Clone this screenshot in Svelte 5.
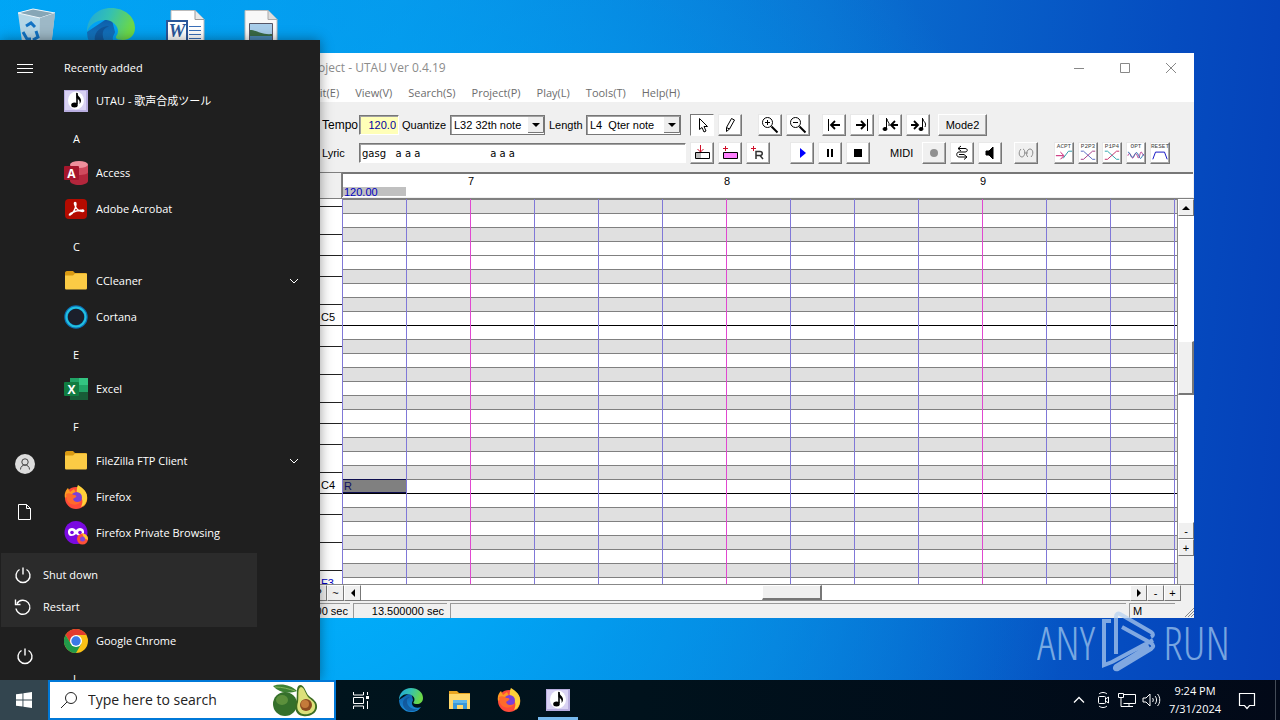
<script>
  const notes = ['C', 'B', 'A#', 'A', 'G#', 'G', 'F#', 'F', 'E', 'D#', 'D', 'C#'];
  // The roll is listed from the top, beginning at G#5.
  const rows = Array.from({ length: 28 }, (_, i) => {
    const note = notes[(i + 4) % 12];
    const label = note === 'C' ? note + (i === 8 ? 5 : 4) : note === 'F' && i === 27 ? 'F3' : '';
    return { id: i, note, label, sharp: note.length === 2 };
  });

  const apps = [
    { head: 'A' },
    { name: 'Access', icon: 'access' },
    { name: 'Adobe Acrobat', icon: 'acrobat' },
    { head: 'C' },
    { name: 'CCleaner', icon: 'folder', more: true },
    { name: 'Cortana', icon: 'cortana' },
    { head: 'E' },
    { name: 'Excel', icon: 'excel' },
    { head: 'F' },
    { name: 'FileZilla FTP Client', icon: 'folder', more: true },
    { name: 'Firefox', icon: 'firefox' },
    { name: 'Firefox Private Browsing', icon: 'private' },
    {},
    {},
    { name: 'Google Chrome', icon: 'chrome' },
    { head: 'I' }
  ];

  const menus = ['Edit(E)', 'View(V)', 'Search(S)', 'Project(P)', 'Play(L)', 'Tools(T)', 'Help(H)'];
  const editGroups = [['pointer', 'pencil'], ['zoomin', 'zoomout'], ['first', 'last', 'prevnote', 'nextnote']];
  const noteButtons = ['insert', 'addnote', 'addrest'];
  const playButtons = ['play', 'pause', 'stop'];
  const midiButtons = ['record', 'loop', 'speaker'];
  const pitchButtons = ['ACPT', 'P2P3', 'P1P4', 'OPT', 'RESET'];
  let lyric = $state('gasg   a a a' + '\u00a0'.repeat(22) + 'a a a');
  let tempo = $state('120.0');
  let query = $state('');
</script>

{#snippet app(name)}
  <svg class="app" viewBox="0 0 24 24" aria-hidden="true">
    {#if name === 'utau'}
      <rect y="1" width="24" height="22" fill="#b9aee0" /><rect x="1" y="2" width="21" height="19" fill="#d9d2f3" />
      <ellipse cx="12" cy="11.500" rx="8" ry="9" fill="#fff" />
      <path d="M13 4v11" stroke="#000" stroke-width="1.600" /><ellipse cx="10.500" cy="16" rx="3.300" ry="2.500" fill="#000" />
      <path d="M12.500 3c.5 4 4.500 5 4.500 8.500 0 1.500-.7 2.500-1.500 3.500.8-3-.5-4.500-3-6z" fill="#000" />
    {:else if name === 'access'}
      <path d="M6 4v16c0 2 4 4 9 4s9-2 9-4V4z" fill="#b3263c" /><path d="M6 4v7c0 2 4 3 9 3s9-1 9-3V4z" fill="#d04a5e" />
      <ellipse cx="15" cy="3.500" rx="9" ry="3.500" fill="#ef8f9c" /><rect y="5" width="15" height="14" rx="1" fill="#a5152b" />
      <text x="7.500" y="16.500" text-anchor="middle" class="letter">A</text>
    {:else if name === 'acrobat'}
      <rect x="1" y="2" width="22" height="20" rx="4" fill="#b30b00" />
      <path d="M6 18c3-1 6-7 6-11 0-2-2-2-1.500 0 1 4 4 7.500 8 7.500 2 0 1.500-1.700-.5-1.500-4 .2-8 1.500-11 3.200-2 1.300-2 2-1 1.800z" fill="none" stroke="#fff" stroke-width="1.400" />
    {:else if name === 'folder'}
      <path d="M1 4c0-1 .5-2 2-2h6l2 2h10c1 0 2 .5 2 2v3H1z" fill="#d99a13" /><path d="M1 6.500h8L11 4.500h12V19c0 1-.6 1.500-1.500 1.500h-19C1.500 20.500 1 20 1 19z" fill="#fbcb45" />
    {:else if name === 'cortana'}
      <circle cx="12" cy="12" r="10" fill="#1b1f2b" stroke="#0b6fb5" stroke-width="3.500" /><circle cx="12" cy="12" r="9.600" fill="none" stroke="#22c1e0" stroke-width="2" />
    {:else if name === 'excel'}
      <path d="M6 1h18v22H6z" fill="#21a366" /><path d="M15 1h9v7h-9z" fill="#33c481" /><path d="M6 1h9v7H6z" fill="#21a366" /><path d="M6 8h9v7H6z" fill="#107c41" /><path d="M6 15h18v8H6z" fill="#185c37" />
      <rect y="5" width="15" height="14" rx="1" fill="#107c41" /><text x="7.500" y="16.500" text-anchor="middle" class="letter">X</text>
    {:else if name === 'firefox'}
      <circle cx="12" cy="13" r="11" fill="#ff4b3a" /><path d="M1 13C0 8 2 5 4 3l2 4 4-3 2 4 2-6c3 1 8 4 9 9 1 4-1 9-4 11 2-5 1-9-3-12L6 9z" fill="#ff9a22" />
      <path d="M14 0c5 3 10 7 9 14-1 4-3 7-6 8 3-6 1-10-3-13-2-3-1-7 0-9z" fill="#ffd13a" />
      <circle cx="12.500" cy="12.500" r="5.500" fill="#7b40d8" /><path d="M2 9c3-2 6 0 8 1 2 0 3 1 2 2l-3 2c1 3 4 4 8 2-2 5-12 5-14-1z" fill="#ff6a2b" />
    {:else if name === 'private'}
      <circle cx="12" cy="11.500" r="11.500" fill="#7a0ae0" /><path d="M5 8c3-2 5-1 7 1 2-2 4-3 7-1 2 2 1 7-2 7-2 0-4-1-5-2-1 1-3 2-5 2-3 0-4-5-2-7z" fill="#fff" />
      <circle cx="8" cy="11.500" r="1.800" fill="#7a0ae0" /><circle cx="16" cy="11.500" r="1.800" fill="#7a0ae0" />
      <circle cx="18.500" cy="18" r="5.500" fill="#ff5138" /><path d="M18 12c4 1 6 3 6 7l-4-2z" fill="#ffc52e" /><circle cx="18.500" cy="18" r="2.500" fill="#8247d6" />
    {:else if name === 'chrome'}
      <circle cx="12" cy="12" r="12" fill="#fbc116" /><path d="M1.600 6A12 12 0 0 1 22.400 6H12l-5 9z" fill="#e33b2e" />
      <path d="M1.600 6A12 12 0 0 0 12 24l5.200-9H7z" fill="#219a4a" /><circle cx="12" cy="12" r="6" fill="#fff" /><circle cx="12" cy="12" r="4.700" fill="#3b79e8" />
    {:else if name === 'edge'}
      <defs>
        <linearGradient id="edge-top" x1="0" x2="1" y2=".3"><stop offset="0" stop-color="#1ea5e0" /><stop offset=".5" stop-color="#35c1b0" /><stop offset="1" stop-color="#6bd848" /></linearGradient>
        <linearGradient id="edge-low" x2="0" y2="1"><stop stop-color="#0c59a4" /><stop offset="1" stop-color="#1b8fdc" /></linearGradient>
      </defs>
      <path d="M0 12a12 12 0 0 0 12 12c5 0 8-2 10-5-3 1.500-8 1-9-3-.500-2 1-3 1-4L12 4z" fill="url(#edge-low)" />
      <path d="M0 12C0 5 5 0 12 0s12 4.500 12 10c0 4-3 6-6 6-4 0-4-1.500-3-2.500C17 10 13 6 9 6 4 6 1 9 0 12z" fill="url(#edge-top)" />
      <path d="M8 12c-1 5 4 10 11 9-5 4-13 3-15-4-1-5 3-8 7-8-2 1-3 2-3 3z" fill="#114a8b" opacity=".65" />
    {:else if name === 'explorer'}
      <path d="M1 3h8l2 2h11v5H1z" fill="#e9a520" /><path d="M1 6h21v15H1z" fill="#ffd86b" /><path d="M5 12h14v9h-4v-4H9v4H5z" fill="#3a98d8" /><path d="M5 12h14v3H5z" fill="#5fb7ea" />
    {/if}
  </svg>
{/snippet}

{#snippet tool(name)}
  <svg class="tool" viewBox="0 0 20 18" fill="none" stroke="#000" aria-hidden="true">
    {#if name === 'pointer'}
      <path d="M7.500 2.500v11l2.500-2 2 4.500 2-1-2-4.500h3.500z" fill="#fff" />
    {:else if name === 'pencil'}
      <path d="M6.500 15.500v-4l5-9 3 1.500-5 9zM6.500 11.500l3 1.500" fill="#fff" />
    {:else if name === 'zoomin' || name === 'zoomout'}
      <circle cx="7.500" cy="6.500" r="5" /><path d="M5 6.500h5" /><path d="M11.500 10.500l6 6" stroke-width="2" />
      {#if name === 'zoomin'}<path d="M7.500 4v5" />{/if}
    {:else if name === 'first' || name === 'last'}
      <g transform={name === 'last' ? 'matrix(-1 0 0 1 20 0)' : ''}><path d="M4.500 3v12" /><path d="M16 9H7M11 5L7 9l4 4" stroke-width="1.800" /></g>
    {:else if name === 'prevnote'}
      <path d="M6.500 2v11M7 3c0 3 3 3 2 7" /><ellipse cx="5" cy="13" rx="2" ry="1.500" fill="#000" /><path d="M18 9h-6M15 5l-4 4 4 4" stroke-width="1.800" />
    {:else if name === 'nextnote'}
      <path d="M3 9h7M6 5l4 4-4 4" stroke-width="1.800" /><path d="M14.500 2v11M15 3c0 3 4 3 2 8" /><ellipse cx="13" cy="13" rx="2" ry="1.500" fill="#000" />
    {:else if name === 'insert'}
      <path d="M3.500 8.500h14v6h-14z" fill="#fff" /><path d="M4 9h5v5H4z" fill="#bbb" stroke="none" /><path d="M8.500 1v7M5.500 5l3 3 3-3" stroke="#d0102a" />
    {:else if name === 'addnote'}
      <path d="M3.500 8.500h14v6h-14z" fill="#ff80ff" /><path d="M5.500 2v5M3 4.500h5" stroke="#d0102a" />
    {:else if name === 'addrest'}
      <path d="M5.500 2v5M3 4.500h5" stroke="#d0102a" /><path d="M8 15V7.500h4c3 0 3 4 0 4H8M12 11.500l3 3.500" stroke="#333" stroke-width="1.500" />
    {:else if name === 'play'}
      <path d="M8 4v10l6-5z" fill="#00f" stroke="none" />
    {:else if name === 'pause'}
      <path d="M8 5v8M12 5v8" stroke-width="2" />
    {:else if name === 'stop'}
      <path d="M6 5h8v8H6z" fill="#000" stroke="none" />
    {:else if name === 'record'}
      <circle cx="10" cy="9" r="4" fill="#909090" stroke="none" />
    {:else if name === 'loop'}
      <path d="M6 4.500h7c3 0 3 3.500 0 3.500H7c-3 0-3 5 0 5h8M9 2L6 4.500 9 7M12 10.500l3 2.500-3 2.500M7 10.500h5" />
    {:else if name === 'speaker'}
      <path d="M6 7h3l4-4v12l-4-4H6z" fill="#000" />
    {:else if name === 'link'}
      <path d="M5 5c-3 3-2 8 1 8s4-7 1-8M12 13c-3-2-1-8 2-8s4 5 1 8M8 9h4" stroke="#8c8c8c" />
    {:else if name === 'ACPT'}
      <path d="M1 12h8M6 8l4 4-4 4" stroke="#c00060" /><path d="M9 15l6-8h4" stroke="#2090a0" />
    {:else if name === 'P2P3'}
      <path d="M2 7h3l10 9h3" stroke="#5060c0" /><path d="M2 16h3L15 7h3" stroke="#a03080" />
    {:else if name === 'P1P4'}
      <path d="M2 7h3l10 9h3" stroke="#20a0a8" /><path d="M2 16h3L15 7h3" stroke="#c02060" />
    {:else if name === 'OPT'}
      <path d="M1 12c3-9 4 9 7 0s4 9 6 0 3 0 5 0" stroke="#b02080" /><path d="M1 8c3 0 3 8 6 5s3-8 6-1 3 0 6-2" stroke="#2070b0" />
    {:else if name === 'RESET'}
      <path d="M2 16l3-8h10l3 8" stroke="#0000c0" />
    {/if}
  </svg>
{/snippet}

{#snippet line(name)}
  <svg class="line" viewBox="0 0 20 20" fill="none" stroke="#fff" aria-hidden="true">
    {#if name === 'menu'}<path d="M2 6.500h16M2 10.500h16M2 14.500h16" />
    {:else if name === 'user'}<circle cx="10" cy="10" r="10" fill="#dcdcdc" stroke="none" /><circle cx="10" cy="8" r="3.200" stroke="#444" /><path d="M5.500 15.500c0-6 9-6 9 0" stroke="#444" />
    {:else if name === 'document'}<path d="M3.500 2.500h8l4 4v11h-12zM11.500 2.500v4h4" />
    {:else if name === 'power'}<path d="M10 2.500v7M6.500 4.500a7 7 0 1 0 7 0" stroke-width="1.400" />
    {:else if name === 'restart'}<path d="M4 6.500a7 7 0 1 1-1 5M2.500 2.500v5h5" stroke-width="1.400" />
    {:else if name === 'down'}<path d="M6 8l4 4 4-4" />
    {:else if name === 'up'}<path d="M5 12.500l5-5 5 5" stroke-width="1.300" />
    {:else if name === 'taskview'}<path d="M2.500 2v3h10V2M2.500 7.500h10v6h-10zM2.500 19v-3h10v3M16.500 2v3M16.500 11v8" /><path d="M15 6h3v3h-3z" fill="#fff" stroke="none" />
    {:else if name === 'camera'}<rect x="5.500" y="6.500" width="7" height="7" rx="1" /><path d="M12.500 9l3-2v6l-3-2M6 4c2-2 6-2 8 0M6 16c2 2 6 2 8 0" />
    {:else if name === 'network'}<path d="M6 4.500h12.500v9H6.500M8 16.500h8M12 13.500v3M1.500 3.500h5v4h-5zM4 7.500v9h4" />
    {:else if name === 'sound'}<path d="M2 8h3l4-4v12l-4-4H2zM11.500 8c1 1 1 3 0 4M14 6c2 2 2 6 0 8M16.500 4c3 3 3 9 0 12" />
    {:else if name === 'message'}<path d="M2.500 3.500h15v12h-5l-2.500 3-2.500-3h-5z" stroke-width="1.200" />
    {/if}
  </svg>
{/snippet}

{#snippet arrow(d)}
  <svg class="arrow" viewBox="0 0 8 8" aria-hidden="true"><path {d} /></svg>
{/snippet}

<div class="screen">
  <main class="desktop">
    <div class="shortcuts">
      <svg viewBox="0 0 48 48" aria-label="Recycle Bin"><path d="M5 5l15-4 22 4-5 43H11z" fill="#c9dbe4" opacity=".9" /><path d="M5 5l15-4 22 4-15 5z" fill="#87a6b6" stroke="#eef6fa" /><path d="M27 10l15-5-5 43H26z" fill="#9db8c6" /><path d="M13 18l5-3 4 4M10 24l4 7h4M20 32l5-3-2-6" stroke="#1273c4" stroke-width="3" fill="none" /></svg>
      {@render app('edge')}
      <svg viewBox="0 0 48 48" aria-label="Word document"><path d="M10 2.500h24l9 9V48H10z" fill="#fff" stroke="#bbb" /><path d="M34 2.500v9h9" fill="#e8e8e8" stroke="#999" /><path d="M28 18.500h12M28 22.500h12M28 26.500h12M28 30.500h12" stroke="#3a6fb8" /><path d="M6 13h20v22H6z" fill="#fff" stroke="#2b579a" stroke-width="2" /><text x="16" y="29" text-anchor="middle" class="word">W</text></svg>
      <svg viewBox="0 0 48 48" aria-label="Picture"><path d="M10 2.500h23l9 9V48H10z" fill="#f8f8f8" stroke="#bbb" /><path d="M33 2.500v9h9" fill="#ddd" stroke="#aaa" /><path d="M14.500 15.500h23v18h-23z" fill="#a8cdea" stroke="#556" /><path d="M15 22c7 0 11 5 22 4v7H15z" fill="#3a6a45" /><path d="M15 28h22v5H15z" fill="#4a86b0" /></svg>
    </div>

    <section class="window">
      <header class="titlebar">
        <span class="title">Project - UTAU Ver 0.4.19</span>
        <div class="caption">
          <button aria-label="Minimize"><svg viewBox="0 0 12 12"><path d="M1 6.500h10" /></svg></button>
          <button aria-label="Maximize"><svg viewBox="0 0 12 12"><path d="M1.500 1.500h9v9h-9z" /></svg></button>
          <button aria-label="Close"><svg viewBox="0 0 12 12"><path d="M1 1l10 10M11 1L1 11" /></svg></button>
        </div>
      </header>
      <nav class="menubar">{#each menus as item}<button>{item}</button>{/each}</nav>

      <div class="toolbar">
        <div class="toolrow">
          <div class="fields">
            <label for="tempo" class="big">Tempo</label>
            <input id="tempo" class="tempo" bind:value={tempo} />
            <label for="quantize">Quantize</label>
            <select id="quantize"><option>L32 32th note</option></select>
            <label for="length">Length</label>
            <select id="length"><option>L4&nbsp; Qter note</option></select>
          </div>
          {#each editGroups as group, g}
            <div class="group" class:wide={g === 0}>{#each group as name}<button class="btn" class:pressed={name === 'pointer'} aria-label={name}>{@render tool(name)}</button>{/each}</div>
          {/each}
          <button class="btn mode">Mode2</button>
        </div>
        <div class="toolrow">
          <div class="fields">
            <label for="lyric">Lyric</label>
            <input id="lyric" class="lyric" bind:value={lyric} />
          </div>
          <div class="group far">{#each noteButtons as name}<button class="btn" aria-label={name}>{@render tool(name)}</button>{/each}</div>
          <div class="group far">{#each playButtons as name}<button class="btn" aria-label={name}>{@render tool(name)}</button>{/each}</div>
          <span class="midi">MIDI</span>
          <div class="group">{#each midiButtons as name}<button class="btn" class:off={name === 'record'} aria-label={name}>{@render tool(name)}</button>{/each}</div>
          <div class="group wide"><button class="btn off" aria-label="link">{@render tool('link')}</button></div>
          <div class="group">{#each pitchButtons as name}<button class="btn pitch"><span>{name}</span>{@render tool(name)}</button>{/each}</div>
        </div>
      </div>

      <div class="ruler">
        <div class="corner"></div>
        <div class="measures">
          <span class="mark first"></span><span class="mark">7</span><span class="mark">8</span><span class="mark">9</span>
          <span class="tempomark">120.00</span>
        </div>
      </div>

      <div class="roll">
        <div class="keys">
          {#each rows as r (r.id)}<div class="key" class:sharp={r.sharp} class:edge={r.note === 'E' || r.note === 'B'} class:blue={r.label === 'F3'}>{r.label}</div>{/each}
        </div>
        <div class="grid">
          {#each rows as r (r.id)}
            <div class="lane" class:sharp={r.sharp} class:octave={r.note === 'B'}>{#if r.label === 'C4'}<span class="note">R</span>{/if}</div>
          {/each}
          <div class="bars"></div>
        </div>
        <div class="vscroll">
          <button class="sb" aria-label="Scroll up">{@render arrow('M0 6h8L4 2z')}</button>
          <div class="track"><span class="before"></span><span class="thumb"></span><span class="after"></span></div>
          <button class="sb">-</button><button class="sb">+</button>
        </div>
      </div>

      <div class="hscroll">
        <button class="sb">?</button><button class="sb">~</button>
        <button class="sb" aria-label="Scroll left">{@render arrow('M6 0v8L2 4z')}</button>
        <div class="track"><span class="before"></span><span class="thumb"></span><span class="after"></span></div>
        <button class="sb" aria-label="Scroll right">{@render arrow('M2 0v8l4-4z')}</button>
        <button class="sb">-</button><button class="sb">+</button>
      </div>

      <footer class="status">
        <span class="panel begin">00 sec</span><span class="panel time">13.500000 sec</span><span class="panel fill"></span><span class="panel flag">M</span>
        <svg class="grip" viewBox="0 0 10 10" aria-hidden="true"><path d="M1 10l9-9M4 10l6-6M7 10l3-3" /></svg>
      </footer>
    </section>

    <div class="watermark">
      <span>ANY</span>
      <svg viewBox="0 0 56 62" aria-hidden="true"><path d="M15 43V6c0-3 2-4 4-3l31 18c3 2 2 4 0 5M10 10H3v44l8-3 41-22M21 16l29 16c3 2 3 4 0 6L17 58c-3 1-4-1-2-3l33-20" /></svg>
      <span>RUN</span>
    </div>

    <aside class="start">
      <div class="rail">
        <button aria-label="Expand">{@render line('menu')}</button>
        <div class="lower">
          <button aria-label="Account">{@render line('user')}</button>
          <button class="docs" aria-label="Documents">{@render line('document')}</button>
          <button aria-label="Power">{@render line('power')}</button>
        </div>
      </div>
      <ul class="apps">
        <li class="recent">Recently added</li>
        <li>{@render app('utau')}<span>UTAU - 歌声合成ツール</span></li>
        {#each apps as a}
          {#if a.head}<li class="head">{a.head}</li>
          {:else if a.name}<li>{@render app(a.icon)}<span>{a.name}</span>{#if a.more}<i>{@render line('down')}</i>{/if}</li>
          {:else}<li></li>{/if}
        {/each}
      </ul>
      <div class="flyout">
        <button>{@render line('power')}Shut down</button>
        <button>{@render line('restart')}Restart</button>
      </div>
    </aside>
  </main>

  <footer class="taskbar">
    <button class="winkey" aria-label="Start"><svg viewBox="0 0 16 16"><path d="M0 2.300L6.500 1.400V7.600H0zM7.400 1.200L16 0v7.600H7.400zM0 8.400h6.500v6.200L0 13.700zM7.400 8.400H16V16l-8.600-1.200z" fill="#fff" /></svg></button>
    <label class="search">
      <svg class="glass" viewBox="0 0 18 18" aria-hidden="true"><circle cx="11" cy="7" r="5.500" /><path d="M7 11l-6 6" /></svg>
      <input placeholder="Type here to search" aria-label="Search" bind:value={query} />
      <svg class="avocado" viewBox="0 0 46 34" aria-hidden="true">
        <path d="M1 3c8-3 18-1 24 5-8 3-18 2-24-5z" fill="#3f8234" /><path d="M3 4c8 0 14 2 20 4" stroke="#82b85c" fill="none" />
        <ellipse cx="13" cy="21" rx="12" ry="12" fill="#35702b" /><ellipse cx="10" cy="17" rx="6" ry="5" fill="#6d9e45" opacity=".7" />
        <path d="M28 2c5 0 5 7 9 11 4 3 9 6 8 12-1 6-8 9-14 8-7-1-9-7-7-14 2-6-1-16 4-17z" fill="#3d6d22" /><path d="M29 4c4 1 4 7 8 11 4 3 7 5 6 10s-7 7-12 6-7-6-5-12c1-6-1-14 3-15z" fill="#dce07a" />
        <circle cx="34" cy="22" r="6" fill="#8c4a1f" /><circle cx="33" cy="21" r="4" fill="#c47a3a" />
      </svg>
    </label>
    <button class="task view" aria-label="Task view">{@render line('taskview')}</button>
    <button class="task" aria-label="Edge">{@render app('edge')}</button>
    <button class="task" aria-label="File Explorer">{@render app('explorer')}</button>
    <button class="task" aria-label="Firefox">{@render app('firefox')}</button>
    <button class="task active" aria-label="UTAU">{@render app('utau')}</button>
    <div class="tray">
      <button aria-label="Show hidden icons">{@render line('up')}</button>
      <button aria-label="Meet now">{@render line('camera')}</button>
      <button aria-label="Network">{@render line('network')}</button>
      <button aria-label="Volume">{@render line('sound')}</button>
      <time><span>9:24 PM</span><span>7/31/2024</span></time>
      <button class="messages" aria-label="Notifications">{@render line('message')}</button>
    </div>
  </footer>
</div>

<style>
  :global(body) { margin: 0; }
  * { box-sizing: border-box; }
  button { appearance: none; border: 0; background: none; padding: 0; margin: 0; color: inherit; font: inherit; }
  svg { display: block; flex: none; }
  .screen { display: flex; flex-direction: column; height: 100vh; overflow: hidden; font: 11px/16px "Open Sans", "Noto Sans CJK JP", sans-serif; color: #fff; }
  .desktop { position: relative; flex: 1; min-height: 0; overflow: hidden; background: radial-gradient(ellipse 60% 110% at 25% 70%, #00b4ff 0%, #00a4f4aa 45%, #0090e600 100%), linear-gradient(95deg, #00a6f6 0%, #0894e8 30%, #0a70d0 62%, #054cc0 88%, #053fb8 100%); }
  .shortcuts { display: flex; gap: 26px; padding: 8px 13px; }
  .shortcuts svg { width: 48px; height: 48px; }
  .app { width: 24px; height: 24px; }
  .line { width: 20px; height: 20px; }
  .letter { font: bold 12px "Open Sans", sans-serif; fill: #fff; }
  .word { font: italic bold 19px "Liberation Serif", serif; fill: #2b579a; }

  .window { position: absolute; inset: 53px 86px 62px 290px; display: flex; flex-direction: column; background: #f0f0f0; color: #000; font: 11px/14px "Liberation Sans", sans-serif; }
  .titlebar { display: flex; align-items: center; height: 30px; background: #fff; color: #8c8c8c; font: 12px/16px "Open Sans", sans-serif; }
  .title { flex: 1; padding-left: 16px; }
  .caption { display: flex; }
  .caption button { display: grid; place-items: center; width: 46px; height: 30px; }
  .caption svg { width: 12px; height: 12px; fill: none; stroke: #888; }
  .menubar { display: flex; gap: 16px; height: 19px; padding-left: 17px; background: #fff; color: #6d6d6d; font: 11px/19px "Open Sans", sans-serif; }
  .toolbar { display: flex; flex-direction: column; gap: 6px; height: 70px; padding: 12px 0 0 32px; }
  .toolrow { display: flex; align-items: center; height: 22px; }
  .fields { display: grid; grid-template-columns: 37px 40px 51px 96px 40px 100px; align-items: center; width: 368px; flex: none; }
  .fields label { padding-left: 3px; white-space: nowrap; overflow: hidden; }
  .fields label:first-child { padding-left: 0; }
  .fields .big { font-size: 12px; }
  .fields input, .fields select { height: 20px; min-width: 0; margin: 0; padding: 0 2px; border: 1px solid; border-color: #777 #fff #fff #777; border-radius: 0; background: #fff; box-shadow: inset 1px 1px #a0a0a0; color: #000; font: 11px/16px "Liberation Sans", sans-serif; outline: 0; }
  .fields select { width: 95px; padding-left: 3px; border-color: #777; appearance: none; background: url("data:image/svg+xml,%3Csvg xmlns='http://www.w3.org/2000/svg' width='16' height='16'%3E%3Cpath d='M0 0h16v16H0z' fill='%23eee'/%3E%3Cpath d='M15.500 0v15.500H0' fill='none' stroke='%23777'/%3E%3Cpath d='M4 6h8l-4 4z'/%3E%3C/svg%3E") no-repeat right center #fff; }
  .fields .tempo { width: 40px; background: #ffffb8; color: #0000a0; text-align: right; }
  .fields .lyric { grid-column: 2 / 7; font: 10px/16px "DejaVu Sans", sans-serif; }
  .group { display: flex; gap: 4px; margin-right: 12px; }
  .toolrow:first-child .group:last-of-type { margin-right: 8px; }
  .group.wide { margin-right: 16px; }
  .group.far { margin-right: 20px; }
  .btn { display: grid; place-items: center; width: 24px; height: 22px; background: #fff; border: 1px solid; border-color: #e8e8e8 #777 #777 #e8e8e8; box-shadow: inset -1px -1px #a8a8a8; }
  .btn.pressed { border-color: #777 #fff #fff #777; box-shadow: none; }
  .btn.off, .btn.mode { background: #f0f0f0; border-color: #fff #777 #777 #fff; }
  .btn.mode { width: 49px; }
  .tool { width: 20px; height: 18px; }
  .midi { width: 32px; }
  .btn.pitch { position: relative; width: 20px; }
  .btn.pitch span { position: absolute; top: 1px; font: 6px/6px "Liberation Mono", monospace; color: #444; }
  .btn.pitch .tool { width: 18px; }

  .ruler { display: flex; height: 27px; border-bottom: 1px solid #808080; }
  .corner { width: 52px; border-top: 1px solid #808080; border-right: 1px solid #808080; }
  .measures { position: relative; display: flex; flex: 1; margin: 0 1px 1px 0; border: solid #777; border-width: 2px 0 0 1px; background: #fff; overflow: hidden; }
  .mark { flex: none; width: 256px; text-align: center; }
  .mark.first { width: 0; }
  .tempomark { position: absolute; left: 0; bottom: 1px; width: 63px; height: 9px; padding-left: 1px; background: #c0c0c0; color: #0000c0; line-height: 10px; }
  .roll { display: flex; flex: 1; min-height: 0; overflow: hidden; }
  .keys { width: 52px; background: #fff; }
  .key { height: 14px; padding-left: 31px; line-height: 11px; border-top: 1px solid transparent; }
  .key.edge { border-top-color: #222; }
  .key.sharp { background: linear-gradient(transparent 6px, #222 6px, #222 7px, transparent 7px); }
  .key.blue { color: #0000c0; }
  .grid { position: relative; flex: 1; min-width: 0; background: #fff; }
  .lane { height: 14px; border-top: 1px solid #808080; }
  .lane.sharp { background: #e0e0e0; }
  .lane.octave { border-top-color: #000; }
  .note { display: block; width: 65px; height: 14px; margin-top: -1px; padding-left: 1px; border: 1px solid #101050; background: #808080; color: #101060; line-height: 13px; }
  .bars { position: absolute; inset: 0; background: linear-gradient(90deg, transparent 128px, #e048d0 128px, #e048d0 129px, transparent 129px) 0 0 / 256px 100%, linear-gradient(90deg, #8078d8 1px, transparent 1px) 0 0 / 64px 100%; }
  .sb { display: grid; place-items: center; flex: none; width: 17px; height: 17px; background: #f0f0f0; border: 1px solid; border-color: #fff #777 #777 #fff; line-height: 12px; }
  .arrow { width: 8px; height: 8px; }
  .track { display: flex; flex: 1; background: #fff; }
  .thumb { background: #f0f0f0; border: solid; border-width: 1px 2px 2px 1px; border-color: #fff #777 #777 #fff; }
  .vscroll { display: flex; flex-direction: column; width: 17px; padding-bottom: 28px; border-left: 1px solid #888; }
  .vscroll .sb { width: 16px; }
  .vscroll .track { flex-direction: column; }
  .vscroll .before { flex: 125; }
  .vscroll .thumb { flex: 52; }
  .vscroll .after { flex: 127; }
  .hscroll { display: flex; height: 17px; padding: 0 13px 0 20px; border-top: 1px solid #888; }
  .hscroll .sb { height: 16px; }
  .hscroll .track { border-bottom: 1px solid #888; }
  .hscroll .before { flex: 401; }
  .hscroll .thumb { flex: 57; }
  .hscroll .after { flex: 308; }
  .status { display: flex; gap: 3px; height: 17px; padding-top: 2px; }
  .panel { border: solid #999; border-width: 1px 0 0 1px; line-height: 15px; white-space: nowrap; }
  .panel.begin { width: 60px; padding-right: 2px; text-align: right; }
  .panel.time { width: 94px; padding-right: 3px; text-align: right; }
  .panel.fill { flex: 1; }
  .panel.flag { width: 46px; padding-left: 3px; }
  .grip { align-self: flex-end; width: 10px; height: 10px; margin: 0 0 1px 6px; stroke: #888; }

  .watermark { position: absolute; right: 50px; bottom: 7px; display: flex; align-items: center; gap: 6px; font: 300 46px/62px "Open Sans Condensed Light", "Open Sans Condensed", "Liberation Sans Narrow", sans-serif; color: #a8cdf0; opacity: .7; }
  .watermark svg { width: 56px; height: 62px; fill: none; stroke: #b4d0f0; stroke-width: 4; }

  aside.start { position: absolute; inset: 40px auto 0 0; display: grid; grid-template-columns: 48px 1fr; width: 320px; background: #1f1f1f; box-shadow: 0 0 12px #0006; }
  .rail { display: flex; flex-direction: column; justify-content: space-between; padding-top: 4px; min-height: 0; }
  .rail button { display: grid; place-items: center; width: 50px; height: 48px; }
  .docs { margin-bottom: 96px; }
  .apps { list-style: none; margin: 0; padding: 7px 0 0; min-height: 0; overflow: hidden; }
  .apps li { display: flex; align-items: center; gap: 8px; height: 36px; padding-left: 16px; }
  .apps li.recent { padding-top: 6px; }
  .apps li.head { padding: 4px 0 0 25px; }
  .apps i { margin: 0 16px 0 auto; }
  .flyout { position: absolute; left: 1px; bottom: 53px; width: 256px; padding: 6px 0 4px 12px; background: #2b2b2b; }
  .flyout button { display: flex; align-items: center; gap: 10px; width: 100%; height: 32px; }

  .taskbar { display: flex; height: 40px; background: linear-gradient(90deg, #00161e, #00121c 50%, #020918); }
  .winkey { display: grid; place-items: center; width: 48px; background: #33454f; }
  .winkey svg { width: 16px; height: 16px; }
  .search { display: flex; align-items: center; width: 288px; padding-left: 10px; border: 2px solid #0078d7; background: #fff; }
  .search input { flex: 1; min-width: 0; padding: 0 0 0 10px; border: 0; outline: 0; background: none; color: #222; font: 14px/20px "Open Sans", sans-serif; }
  .search input::placeholder { color: #222; opacity: 1; }
  .glass { width: 18px; height: 18px; fill: none; stroke: #222; }
  .avocado { width: 46px; height: 34px; margin-right: 16px; }
  .task { display: grid; place-items: center; width: 49px; border-bottom: 3px solid transparent; padding-top: 3px; }
  .task.view { width: 50px; }
  .task.active { background: linear-gradient(#76b9ed, #76b9ed) center bottom / 40px 3px no-repeat; background-origin: border-box; background-clip: border-box; }
  .tray { display: flex; align-items: center; margin-left: auto; margin-right: 4px; padding-right: 4px; border-right: 1px solid #444c58; }
  .tray button { display: grid; place-items: center; width: 24px; height: 40px; }
  .tray time { display: flex; flex-direction: column; width: 56px; margin-left: 4px; text-align: center; line-height: 18px; }
  .tray .messages { width: 48px; }
</style>
